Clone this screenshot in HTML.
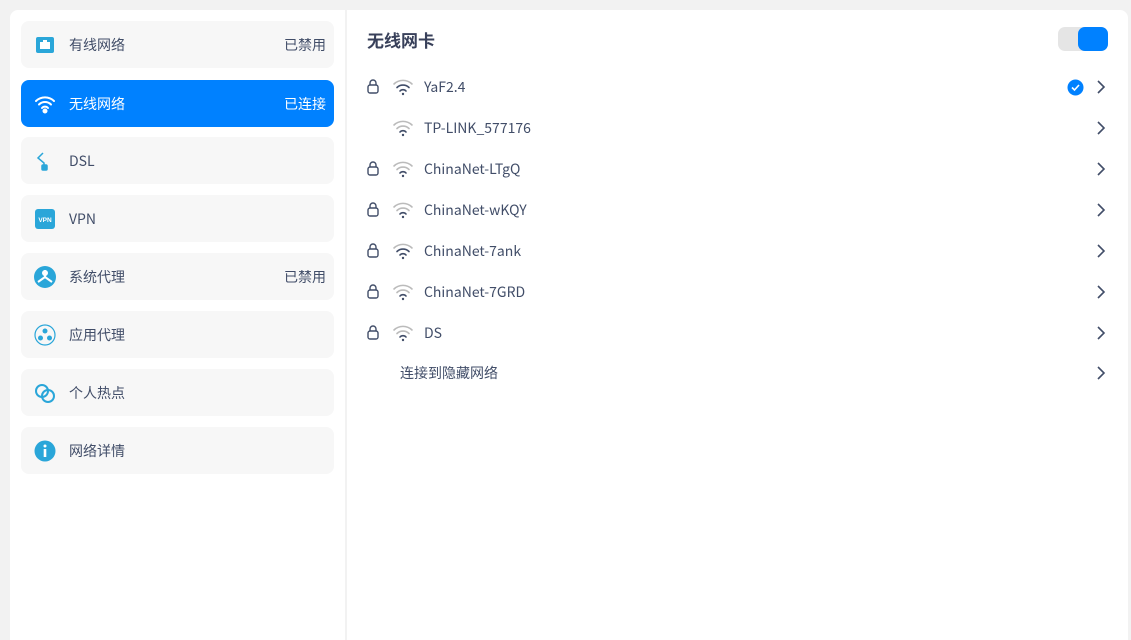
<!DOCTYPE html>
<html><head><meta charset="utf-8"><style>
*{margin:0;padding:0;box-sizing:border-box}
body{width:1131px;height:633px;background:#f2f2f2;font-family:"Noto Sans CJK SC","Liberation Sans",sans-serif;position:relative;overflow:hidden;color:#414d68}
.left{position:absolute;left:10px;top:10px;width:335px;height:630px;background:#fff;border-radius:8px 0 0 0}
.right{position:absolute;left:347px;top:10px;width:781px;height:630px;background:#fff;border-radius:0 8px 0 0}
.item{position:absolute;left:11px;width:313px;height:47px;background:#f7f7f7;border-radius:8px;font-size:14px;line-height:20px}
.item .ic{position:absolute;left:13px;top:13px;width:22px;height:22px}
.item .t{position:absolute;left:48px;top:14px}
.item .s{position:absolute;right:8px;top:14px}
.item.sel{background:#0081ff;color:#fff}
.title{position:absolute;left:20px;top:18px;font-size:17px;line-height:24px;font-weight:bold;color:#38405a}
.tog{position:absolute;left:711px;top:17px;width:50px;height:24px;background:#e5e5e5;border-radius:7px}
.tog div{position:absolute;right:0;top:0;width:30px;height:24px;background:#0081ff;border-radius:7px}
.row{position:absolute;left:0;width:781px;height:30px;font-size:14px;line-height:20px}
.row .lk{position:absolute;left:19px;top:6px}
.row .wf{position:absolute;left:45px;top:6px}
.row .n{position:absolute;left:77px;top:5px}
.row .ch{position:absolute;left:749px;top:7px}
</style></head><body>
<div class="left">
 <div class="item" style="top:11px"><svg class="ic" viewBox="0 0 22 22"><rect x="2" y="3" width="18" height="16" rx="2" fill="#2aa6d9"/><rect x="6" y="8" width="10" height="7" fill="#fff"/><rect x="9" y="6" width="4" height="3" fill="#fff"/></svg><span class="t">有线网络</span><span class="s">已禁用</span></div>
 <div class="item sel" style="top:70px"><svg class="ic" viewBox="0 0 22 22" fill="none" stroke="#fff" stroke-width="2" stroke-linecap="round"><path d="M2 8a13 13 0 0 1 18 0"/><path d="M5 11.5a8.5 8.5 0 0 1 12 0"/><path d="M8 15a4 4 0 0 1 6 0"/><circle cx="11" cy="18" r="1.5" fill="#fff"/></svg><span class="t">无线网络</span><span class="s">已连接</span></div>
 <div class="item" style="top:127px"><svg class="ic" viewBox="0 0 22 22" fill="none" stroke="#2aa6d9" stroke-width="1.5"><path d="M9 3L4 8l6 5v4"/><rect x="8" y="15" width="5" height="5" rx="1" fill="#2aa6d9"/></svg><span class="t">DSL</span></div>
 <div class="item" style="top:185px"><svg class="ic" viewBox="0 0 22 22"><rect x="1" y="1" width="20" height="20" rx="3" fill="#2aa6d9"/><text x="11" y="14" font-size="6.5" fill="#fff" text-anchor="middle" font-family="Liberation Sans" font-weight="bold">VPN</text></svg><span class="t">VPN</span></div>
 <div class="item" style="top:243px"><svg class="ic" viewBox="0 0 22 22"><circle cx="11" cy="11" r="11" fill="#2aa6d9"/><path d="M11 4v7M11 11L4 16M11 11l7 5" stroke="#fff" stroke-width="2"/><circle cx="11" cy="7" r="3" fill="#fff"/></svg><span class="t">系统代理</span><span class="s">已禁用</span></div>
 <div class="item" style="top:301px"><svg class="ic" viewBox="0 0 22 22"><circle cx="11" cy="11" r="10" fill="none" stroke="#2aa6d9" stroke-width="1.2"/><circle cx="11" cy="7" r="2.5" fill="#2aa6d9"/><circle cx="6.5" cy="14" r="2.5" fill="#2aa6d9"/><circle cx="15.5" cy="14" r="2.5" fill="#2aa6d9"/></svg><span class="t">应用代理</span></div>
 <div class="item" style="top:359px"><svg class="ic" viewBox="0 0 22 22" fill="none" stroke="#2aa6d9" stroke-width="2"><circle cx="8" cy="9" r="6"/><circle cx="14" cy="14" r="6"/></svg><span class="t">个人热点</span></div>
 <div class="item" style="top:417px"><svg class="ic" viewBox="0 0 22 22"><circle cx="11" cy="11" r="10.5" fill="#2aa6d9"/><rect x="9.7" y="9" width="2.6" height="8" fill="#fff"/><circle cx="11" cy="6" r="1.5" fill="#fff"/></svg><span class="t">网络详情</span></div>
</div>
<div class="right">
 <div class="title">无线网卡</div>
 <div class="tog"><div></div></div>
 <div class="row" style="top:62px"><svg class="lk" width="14" height="16" viewBox="0 0 14 16" fill="none" stroke="#414d68" stroke-width="1.4"><rect x="2" y="7" width="10" height="8" rx="2"/><path d="M4 7V5a3 3 0 0 1 6 0v2"/></svg><svg class="wf" width="22" height="18" viewBox="0 0 22 18" fill="none" stroke-width="1.6" stroke-linecap="round"><path d="M2 6a13 13 0 0 1 18 0" stroke="#bbb"/><path d="M5 9.5a8.5 8.5 0 0 1 12 0" stroke="#414d68"/><path d="M8 13a4 4 0 0 1 6 0" stroke="#414d68"/><circle cx="11" cy="16" r="1.2" fill="#414d68"/></svg><span class="n">YaF2.4</span><svg style="position:absolute;left:720px;top:7px" width="17" height="17" viewBox="0 0 17 17"><circle cx="8.5" cy="8.5" r="8" fill="#0081ff"/><path d="M5 8.5l2.5 2.5 4.5-5" stroke="#fff" stroke-width="1.6" fill="none"/></svg><svg class="ch" width="10" height="16" viewBox="0 0 10 16"><path d="M2 2l6 6-6 6" stroke="#414d68" stroke-width="1.6" fill="none"/></svg></div>
 <div class="row" style="top:103px"><svg class="wf" width="22" height="18" viewBox="0 0 22 18" fill="none" stroke-width="1.6" stroke-linecap="round"><path d="M2 6a13 13 0 0 1 18 0" stroke="#bbb"/><path d="M5 9.5a8.5 8.5 0 0 1 12 0" stroke="#bbb"/><path d="M8 13a4 4 0 0 1 6 0" stroke="#414d68"/><circle cx="11" cy="16" r="1.2" fill="#414d68"/></svg><span class="n">TP-LINK_577176</span><svg class="ch" width="10" height="16" viewBox="0 0 10 16"><path d="M2 2l6 6-6 6" stroke="#414d68" stroke-width="1.6" fill="none"/></svg></div>
 <div class="row" style="top:144px"><svg class="lk" width="14" height="16" viewBox="0 0 14 16" fill="none" stroke="#414d68" stroke-width="1.4"><rect x="2" y="7" width="10" height="8" rx="2"/><path d="M4 7V5a3 3 0 0 1 6 0v2"/></svg><svg class="wf" width="22" height="18" viewBox="0 0 22 18" fill="none" stroke-width="1.6" stroke-linecap="round"><path d="M2 6a13 13 0 0 1 18 0" stroke="#bbb"/><path d="M5 9.5a8.5 8.5 0 0 1 12 0" stroke="#bbb"/><path d="M8 13a4 4 0 0 1 6 0" stroke="#414d68"/><circle cx="11" cy="16" r="1.2" fill="#414d68"/></svg><span class="n">ChinaNet-LTgQ</span><svg class="ch" width="10" height="16" viewBox="0 0 10 16"><path d="M2 2l6 6-6 6" stroke="#414d68" stroke-width="1.6" fill="none"/></svg></div>
 <div class="row" style="top:185px"><svg class="lk" width="14" height="16" viewBox="0 0 14 16" fill="none" stroke="#414d68" stroke-width="1.4"><rect x="2" y="7" width="10" height="8" rx="2"/><path d="M4 7V5a3 3 0 0 1 6 0v2"/></svg><svg class="wf" width="22" height="18" viewBox="0 0 22 18" fill="none" stroke-width="1.6" stroke-linecap="round"><path d="M2 6a13 13 0 0 1 18 0" stroke="#bbb"/><path d="M5 9.5a8.5 8.5 0 0 1 12 0" stroke="#bbb"/><path d="M8 13a4 4 0 0 1 6 0" stroke="#414d68"/><circle cx="11" cy="16" r="1.2" fill="#414d68"/></svg><span class="n">ChinaNet-wKQY</span><svg class="ch" width="10" height="16" viewBox="0 0 10 16"><path d="M2 2l6 6-6 6" stroke="#414d68" stroke-width="1.6" fill="none"/></svg></div>
 <div class="row" style="top:226px"><svg class="lk" width="14" height="16" viewBox="0 0 14 16" fill="none" stroke="#414d68" stroke-width="1.4"><rect x="2" y="7" width="10" height="8" rx="2"/><path d="M4 7V5a3 3 0 0 1 6 0v2"/></svg><svg class="wf" width="22" height="18" viewBox="0 0 22 18" fill="none" stroke-width="1.6" stroke-linecap="round"><path d="M2 6a13 13 0 0 1 18 0" stroke="#bbb"/><path d="M5 9.5a8.5 8.5 0 0 1 12 0" stroke="#414d68"/><path d="M8 13a4 4 0 0 1 6 0" stroke="#414d68"/><circle cx="11" cy="16" r="1.2" fill="#414d68"/></svg><span class="n">ChinaNet-7ank</span><svg class="ch" width="10" height="16" viewBox="0 0 10 16"><path d="M2 2l6 6-6 6" stroke="#414d68" stroke-width="1.6" fill="none"/></svg></div>
 <div class="row" style="top:267px"><svg class="lk" width="14" height="16" viewBox="0 0 14 16" fill="none" stroke="#414d68" stroke-width="1.4"><rect x="2" y="7" width="10" height="8" rx="2"/><path d="M4 7V5a3 3 0 0 1 6 0v2"/></svg><svg class="wf" width="22" height="18" viewBox="0 0 22 18" fill="none" stroke-width="1.6" stroke-linecap="round"><path d="M2 6a13 13 0 0 1 18 0" stroke="#bbb"/><path d="M5 9.5a8.5 8.5 0 0 1 12 0" stroke="#bbb"/><path d="M8 13a4 4 0 0 1 6 0" stroke="#414d68"/><circle cx="11" cy="16" r="1.2" fill="#414d68"/></svg><span class="n">ChinaNet-7GRD</span><svg class="ch" width="10" height="16" viewBox="0 0 10 16"><path d="M2 2l6 6-6 6" stroke="#414d68" stroke-width="1.6" fill="none"/></svg></div>
 <div class="row" style="top:308px"><svg class="lk" width="14" height="16" viewBox="0 0 14 16" fill="none" stroke="#414d68" stroke-width="1.4"><rect x="2" y="7" width="10" height="8" rx="2"/><path d="M4 7V5a3 3 0 0 1 6 0v2"/></svg><svg class="wf" width="22" height="18" viewBox="0 0 22 18" fill="none" stroke-width="1.6" stroke-linecap="round"><path d="M2 6a13 13 0 0 1 18 0" stroke="#bbb"/><path d="M5 9.5a8.5 8.5 0 0 1 12 0" stroke="#bbb"/><path d="M8 13a4 4 0 0 1 6 0" stroke="#414d68"/><circle cx="11" cy="16" r="1.2" fill="#414d68"/></svg><span class="n">DS</span><svg class="ch" width="10" height="16" viewBox="0 0 10 16"><path d="M2 2l6 6-6 6" stroke="#414d68" stroke-width="1.6" fill="none"/></svg></div>
 <div class="row" style="top:348px"><span class="n" style="left:53px">连接到隐藏网络</span><svg class="ch" width="10" height="16" viewBox="0 0 10 16"><path d="M2 2l6 6-6 6" stroke="#414d68" stroke-width="1.6" fill="none"/></svg></div>
</div>
</body></html>
